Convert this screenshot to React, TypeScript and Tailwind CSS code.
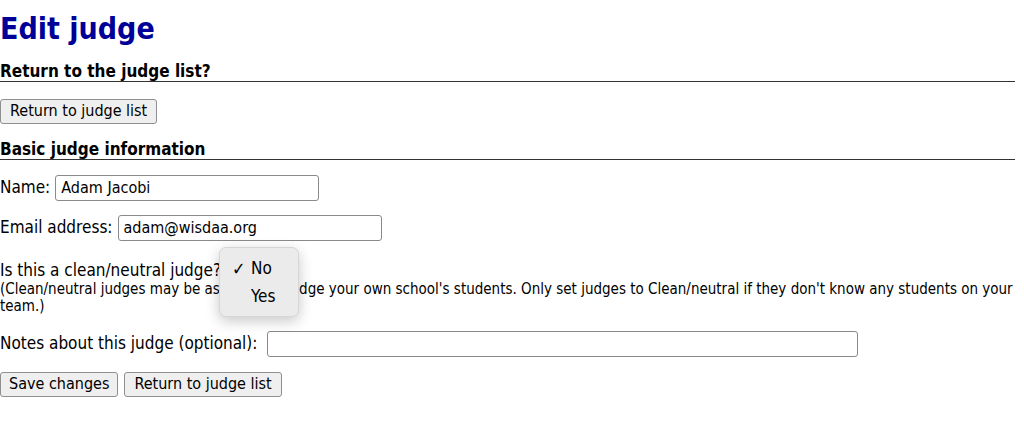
export default function App() {
  const font = { fontFamily: '"DejaVu Sans Condensed", "DejaVu Sans", sans-serif' }

  return (
    <div className="bg-white w-[1015px] text-black text-[17px]" style={font}>
      <h1 className="text-[30px] font-bold text-[#000099] leading-[38px] pt-[10px]">Edit judge</h1>

      {/* Return section */}
      <h2 className="mt-[14px] text-[17px] font-bold leading-[19px] border-b-[1.5px] border-[#333]">
        Return to the judge list?
      </h2>
      <div className="mt-[16px]">
        <button className="h-[25px] px-[9px] bg-[#efefef] border border-[#8f8f8f] rounded-[3px] text-[16px] leading-none">
          Return to judge list
        </button>
      </div>

      {/* Basic info */}
      <h2 className="mt-[16px] text-[17px] font-bold leading-[19px] border-b-[1.5px] border-[#333]">
        Basic judge information
      </h2>
      <div className="mt-[15px] flex items-center gap-[5px] h-[26px]">
        <span>Name:</span>
        <input
          defaultValue="Adam Jacobi"
          className="w-[264px] h-[26px] px-[5px] border border-[#8a8a8a] rounded-[3px] text-[16px]"
          style={font}
        />
      </div>
      <div className="mt-[14px] flex items-center gap-[5px] h-[26px]">
        <span>Email address:</span>
        <input
          defaultValue="adam@wisdaa.org"
          className="w-[264px] h-[26px] px-[5px] border border-[#8a8a8a] rounded-[3px] text-[16px]"
          style={font}
        />
      </div>

      <div className="relative mt-[18px]">
        <div className="leading-[22px]">Is this a clean/neutral judge?</div>
        <p className="text-[15px] leading-[17px]">
          (Clean/neutral judges may be assigned to judge your own school's students. Only set judges to
          Clean/neutral if they don't know any students on your team.)
        </p>
        {/* open select menu */}
        <div className="absolute left-[219px] top-[-12px] w-[80px] h-[70px] bg-[#ebebeb] border border-[#d6d6d6] rounded-[7px] shadow-[0_4px_14px_rgba(0,0,0,0.22)] text-[17px] flex flex-col pt-[10px]">
          <div className="flex items-center h-[22px]">
            <span className="w-[22px] pl-[12px] text-[18px] leading-none">✓</span>
            <span className="ml-[9px]">No</span>
          </div>
          <div className="flex items-center h-[22px] mt-[6px]">
            <span className="ml-[31px]">Yes</span>
          </div>
        </div>
      </div>

      <div className="mt-[16px] flex items-center gap-[10px] h-[26px]">
        <span>Notes about this judge (optional):</span>
        <input
          className="w-[591px] h-[26px] px-[4px] border border-[#8a8a8a] rounded-[3px] text-[16px]"
          style={font}
        />
      </div>
      <div className="mt-[15px] flex gap-[6px]">
        <button className="h-[25px] px-[8px] bg-[#efefef] border border-[#8f8f8f] rounded-[3px] text-[16px] leading-none">
          Save changes
        </button>
        <button className="h-[25px] px-[9px] bg-[#efefef] border border-[#8f8f8f] rounded-[3px] text-[16px] leading-none">
          Return to judge list
        </button>
      </div>
    </div>
  )
}
